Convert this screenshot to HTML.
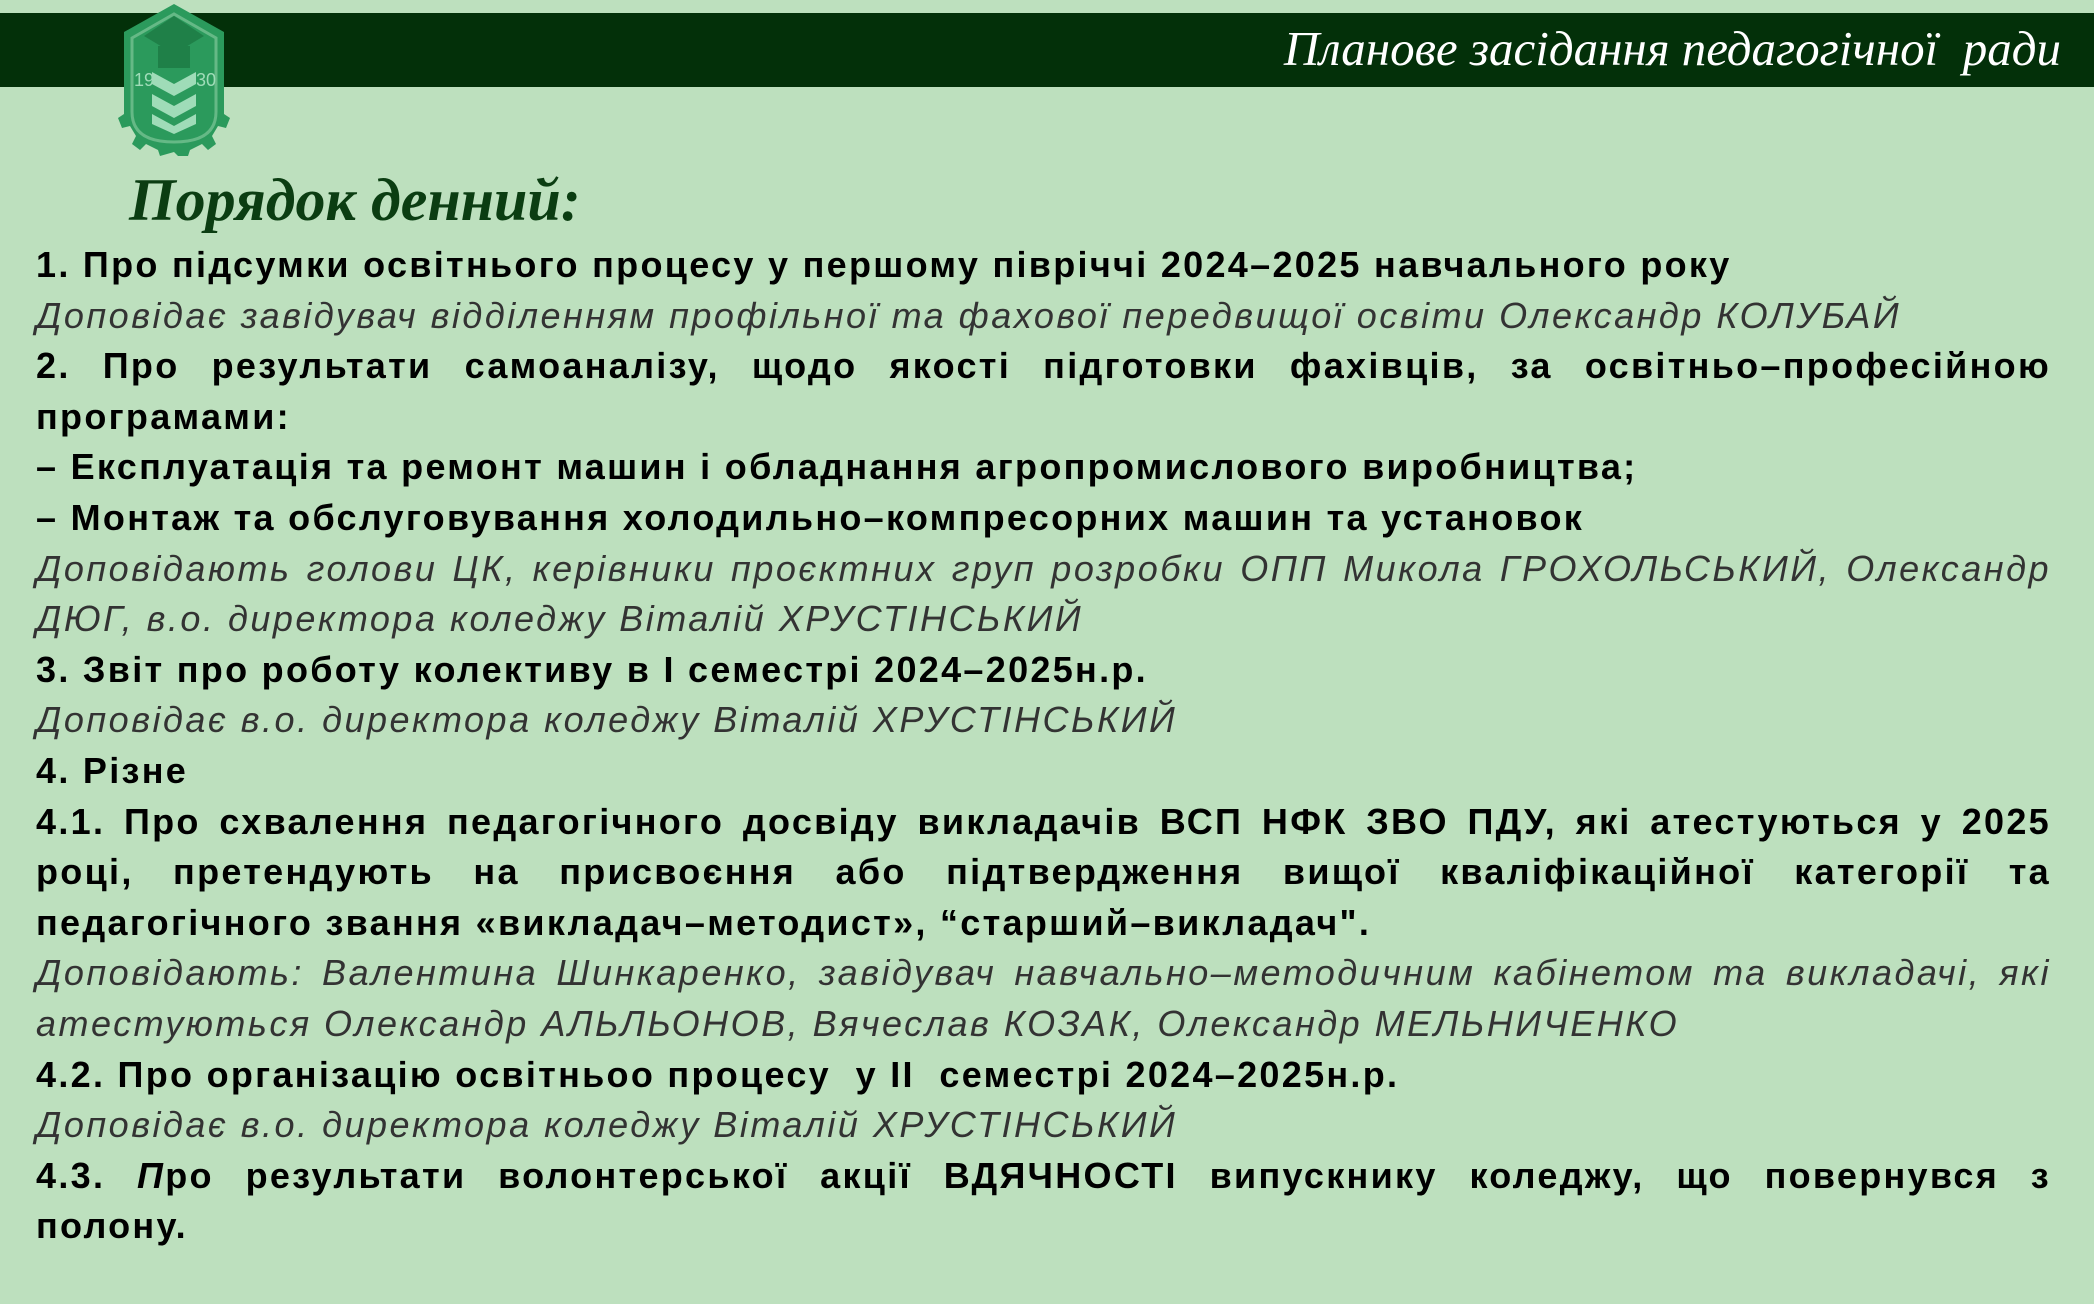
<!DOCTYPE html>
<html><head><meta charset="utf-8"><style>
html,body{margin:0;padding:0;}
body{width:2094px;height:1304px;background:#bde0be;position:relative;overflow:hidden;font-family:"Liberation Sans","DejaVu Sans",sans-serif;}
.bar{position:absolute;left:0;top:13px;width:2094px;height:74px;background:#033009;}
.ht{position:absolute;right:33px;top:20px;font-family:"Liberation Serif",serif;font-style:italic;font-size:49px;color:#fff;white-space:pre;}
.logo{position:absolute;left:116px;top:2px;}
.title{position:absolute;left:129px;top:166px;font-family:"Liberation Serif",serif;font-style:italic;font-weight:bold;font-size:60px;color:#0b3d12;}
.body{position:absolute;left:36px;top:240px;width:2015px;}
.l{height:50.6px;line-height:50.6px;font-size:36px;white-space:nowrap;}
.b{font-weight:bold;color:#000;letter-spacing:2.3px;}
.i{font-style:italic;color:#333;letter-spacing:2.5px;}
.j{text-align:justify;text-align-last:justify;white-space:normal;}
</style></head><body>
<div class="bar"></div>
<div class="ht">Планове засідання педагогічної  ради</div>
<svg class="logo" width="116" height="154" viewBox="0 0 116 154">
<path d="M58 2 L108 30 L108 112 L114 116 L110 126 L102 124 L96 134 L100 142 L92 148 L86 142 L74 148 L72 154 L62 154 L58 150 L44 154 L42 148 L30 142 L24 148 L16 142 L20 134 L14 124 L6 126 L2 116 L8 112 L8 30 Z" fill="#2b9a5c"/>
<path d="M16 36 L58 12 L100 36 L100 110 Q100 140 58 140 Q16 140 16 110 Z" fill="none" stroke="#9fd8b0" stroke-width="3" opacity="0.5"/>
<path d="M58 14 L88 34 L58 52 L28 34 Z" fill="#1f8048"/>
<rect x="42" y="44" width="32" height="22" fill="#1f8048"/>
<path d="M36 70 L58 82 L80 70 L80 82 L58 94 L36 82 Z" fill="#9fdcb8"/>
<path d="M36 92 L58 104 L80 92 L80 104 L58 116 L36 104 Z" fill="#9fdcb8"/>
<path d="M36 112 L58 124 L80 112 L80 122 L58 132 L36 122 Z" fill="#9fdcb8"/>
<text x="18" y="84" font-family="Liberation Sans Narrow,Liberation Sans,sans-serif" font-size="18" fill="#9fdcb8">19</text>
<text x="80" y="84" font-family="Liberation Sans Narrow,Liberation Sans,sans-serif" font-size="18" fill="#9fdcb8">30</text>
</svg>
<div class="title">Порядок денний:</div>
<div class="body">
<div class="l b">1. Про підсумки освітнього процесу у першому півріччі 2024–2025 навчального року</div>
<div class="l i">Доповідає завідувач відділенням профільної та фахової передвищої освіти Олександр КОЛУБАЙ</div>
<div class="l b j">2. Про результати самоаналізу, щодо якості підготовки фахівців, за освітньо–професійною</div>
<div class="l b">програмами:</div>
<div class="l b">– Експлуатація та ремонт машин і обладнання агропромислового виробництва;</div>
<div class="l b">– Монтаж та обслуговування холодильно–компресорних машин та установок</div>
<div class="l i j">Доповідають голови ЦК, керівники проєктних груп розробки ОПП Микола ГРОХОЛЬСЬКИЙ, Олександр</div>
<div class="l i">ДЮГ, в.о. директора коледжу Віталій ХРУСТІНСЬКИЙ</div>
<div class="l b">3. Звіт про роботу колективу в І семестрі 2024–2025н.р.</div>
<div class="l i">Доповідає в.о. директора коледжу Віталій ХРУСТІНСЬКИЙ</div>
<div class="l b">4. Різне</div>
<div class="l b j">4.1. Про схвалення педагогічного досвіду викладачів ВСП НФК ЗВО ПДУ, які атестуються у 2025</div>
<div class="l b j">році, претендують на присвоєння або підтвердження вищої кваліфікаційної категорії та</div>
<div class="l b">педагогічного звання «викладач–методист», “старший–викладач".</div>
<div class="l i j">Доповідають: Валентина Шинкаренко, завідувач навчально–методичним кабінетом та викладачі, які</div>
<div class="l i">атестуються Олександр АЛЬЛЬОНОВ, Вячеслав КОЗАК, Олександр МЕЛЬНИЧЕНКО</div>
<div class="l b">4.2. Про організацію освітньоо процесу&nbsp; у ІІ&nbsp; семестрі 2024–2025н.р.</div>
<div class="l i">Доповідає в.о. директора коледжу Віталій ХРУСТІНСЬКИЙ</div>
<div class="l b j">4.3. <i>П</i>ро результати волонтерської акції ВДЯЧНОСТІ випускнику коледжу, що повернувся з</div>
<div class="l b">полону.</div>
</div>
</body></html>
